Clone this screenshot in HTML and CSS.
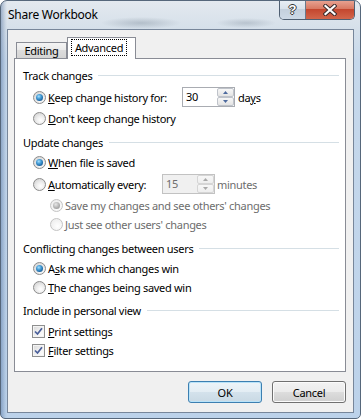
FILE: index.html
```html
<!DOCTYPE html>
<html>
<head>
<meta charset="utf-8">
<link rel="stylesheet" href="styles.css">
</head>
<body>
<div class="window">
  <div class="titlebar">
    <span class="title">Share Workbook</span>
    <div class="caption">
      <div class="cbtn help"><span class="qm">?</span></div>
      <div class="cbtn close">
        <svg width="14" height="12" viewBox="0 0 14 12"><path d="M2.5 2 L11.5 10 M11.5 2 L2.5 10" stroke="#3b2b2b" stroke-width="4.2" stroke-linecap="square" fill="none"/><path d="M2.5 2 L11.5 10 M11.5 2 L2.5 10" stroke="#fff" stroke-width="2.2" stroke-linecap="square" fill="none"/></svg>
      </div>
    </div>
  </div>
  <div class="client">
    <div class="tabs">
      <div class="tab">Editing</div>
      <div class="tab active"><span class="focus">Advanced</span></div>
    </div>
    <div class="panel">
      <div class="group-title">Track changes</div>
      <div class="opt tall first">
        <span class="radio on"></span><span class="lbl w-keep"><u>K</u>eep change history for:</span>
        <span class="spin"><span class="val">30</span><span class="arrows"><span class="arrow"><svg width="5" height="3" viewBox="0 0 5 3"><path d="M0 3 L2.5 0 L5 3Z" fill="#4d6a9e"/></svg></span><span class="arrow"><svg width="5" height="3" viewBox="0 0 5 3"><path d="M0 0 L5 0 L2.5 3Z" fill="#4d6a9e"/></svg></span></span></span>
        <span class="unit">da<u>y</u>s</span>
      </div>
      <div class="opt mid"><span class="radio"></span><span class="lbl"><u>D</u>on't keep change history</span></div>

      <div class="group-title g2">Update changes</div>
      <div class="opt mid"><span class="radio on"></span><span class="lbl"><u>W</u>hen file is saved</span></div>
      <div class="opt tall">
        <span class="radio"></span><span class="lbl w-auto"><u>A</u>utomatically every:</span>
        <span class="spin disabled"><span class="val">15</span><span class="arrows"><span class="arrow"><svg width="5" height="3" viewBox="0 0 5 3"><path d="M0 3 L2.5 0 L5 3Z" fill="#a8a8a8"/></svg></span><span class="arrow"><svg width="5" height="3" viewBox="0 0 5 3"><path d="M0 0 L5 0 L2.5 3Z" fill="#a8a8a8"/></svg></span></span></span>
        <span class="unit dis">minutes</span>
      </div>
      <div class="opt sub"><span class="radio on disabled"></span><span class="lbl dis">Save my changes and see others' changes</span></div>
      <div class="opt sub short"><span class="radio disabled"></span><span class="lbl dis">Just see other users' changes</span></div>

      <div class="group-title g3">Conflicting changes between users</div>
      <div class="opt"><span class="radio on"></span><span class="lbl">A<u>s</u>k me which changes win</span></div>
      <div class="opt short"><span class="radio"></span><span class="lbl"><u>T</u>he changes being saved win</span></div>

      <div class="group-title g4">Include in personal view</div>
      <div class="opt chk first"><span class="check"><svg width="9" height="9" viewBox="0 0 9 9"><path d="M1 4.5 L3.5 7 L8 1.2" stroke="#4a5f9a" stroke-width="1.7" fill="none"/></svg></span><span class="lbl"><u>P</u>rint settings</span></div>
      <div class="opt chk short"><span class="check"><svg width="9" height="9" viewBox="0 0 9 9"><path d="M1 4.5 L3.5 7 L8 1.2" stroke="#4a5f9a" stroke-width="1.7" fill="none"/></svg></span><span class="lbl"><u>F</u>ilter settings</span></div>
    </div>
    <div class="buttons">
      <button class="btn default">OK</button>
      <button class="btn">Cancel</button>
    </div>
  </div>
</div>
</body>
</html>
```
FILE: styles.css
```css
* { box-sizing: border-box; }
html, body { margin: 0; padding: 0; }
body {
  width: 361px;
  height: 419px;
  overflow: hidden;
  background: #fff;
  font-family: "Noto Sans", "Liberation Sans", sans-serif;
  font-size: 11px;
  letter-spacing: -0.3px;
  color: #000;
}
.window {
  width: 361px;
  height: 419px;
  border: 1px solid #56677b;
  border-radius: 7px 7px 5px 5px;
  background:
    linear-gradient(to right, rgba(60, 95, 145, 0.4), rgba(60, 95, 145, 0.1) 4px, rgba(60, 95, 145, 0) 6px),
    radial-gradient(ellipse 40px 6px at 140px 22px, rgba(110, 125, 140, 0.35), rgba(110, 125, 140, 0)),
    radial-gradient(ellipse 30px 5px at 245px 22px, rgba(110, 125, 140, 0.3), rgba(110, 125, 140, 0)),
    linear-gradient(to bottom, #e3e9ef 0, #d6e0ea 27px, #c6d8eb 60px, #bcd2ea 100%);
  display: flex;
  flex-direction: column;
  overflow: hidden;
}
.titlebar {
  height: 28px;
  flex: none;
  display: flex;
  align-items: flex-start;
  justify-content: space-between;
}
.title {
  font-size: 12px;
  letter-spacing: -0.25px;
  line-height: 28px;
  padding-left: 7px;
  color: #000;
}
.caption {
  display: flex;
  height: 20px;
  margin-top: -1px;
  margin-right: 5px;
  border: 1px solid #4f5f72;
  border-top: none;
  border-radius: 0 0 5px 5px;
  overflow: hidden;
}
.cbtn {
  display: flex;
  align-items: center;
  justify-content: center;
}
.help {
  width: 26px;
  border-right: 1px solid #6a798b;
  background: linear-gradient(#eaeff5, #d9e2ec 45%, #c4d0dd 50%, #cdd9e6);
}
.qm {
  font-family: "Liberation Sans", sans-serif;
  font-weight: bold;
  font-size: 13px;
  color: #fff;
  letter-spacing: 0;
  text-shadow: 1px 0 0 #333, -1px 0 0 #333, 0 1px 0 #333, 0 -1px 0 #333;
}
.close {
  width: 48px;
  background: linear-gradient(#e9a696, #d97a64 45%, #c4472f 50%, #d2664b);
}
.client {
  flex: 1;
  margin: 0 6px 5px 6px;
  border: 1px solid #77869a;
  background: #f0f0f0;
  padding: 0 7px 0 6px;
  display: flex;
  flex-direction: column;
}
.tabs {
  height: 28px;
  flex: none;
  display: flex;
  align-items: flex-end;
  padding-left: 2px;
}
.tab {
  width: 51px;
  height: 16px;
  border: 1px solid #898c95;
  border-bottom: none;
  background: linear-gradient(#f4f4f4, #e9e9e9 50%, #dcdcdc 50%, #d4d4d4);
  display: flex;
  align-items: center;
  justify-content: center;
  padding-bottom: 1px;
}
.tab.active {
  width: 69px;
  height: 22px;
  margin-bottom: -1px;
  background: #fff;
  position: relative;
  z-index: 1;
  padding: 0 5px 2px 0;
}
.focus {
  border: 1px dotted #000;
  padding: 0 3px;
  line-height: 15px;
}
.panel {
  height: 314px;
  flex: none;
  border: 1px solid #898c95;
  background: #fff;
  padding: 6px 6px 0 8px;
}
.group-title {
  display: flex;
  align-items: center;
  height: 20px;
  gap: 6px;
}
.group-title::after {
  content: "";
  flex: 1;
  height: 1px;
  background: #d5dfe5;
}
.g2 { margin-top: 3px; }
.g3 { margin-top: 4px; }
.g4 { margin-top: 3px; }
.opt {
  display: flex;
  align-items: center;
  height: 20px;
  padding-left: 10px;
  gap: 2px;
}
.opt.first { margin-top: 1px; }
.opt.tall { height: 22px; }
.opt.mid { height: 21px; }
.opt.short { height: 19px; }
.opt.sub { padding-left: 27px; }
.opt.chk { padding-left: 9px; gap: 3px; }
.lbl { white-space: nowrap; }
.w-keep { width: 132px; }
.w-auto { width: 112px; }
.dis { color: #6d6d6d; }
.unit { margin-left: 1px; }
.unit.dis { margin-left: 0; }
.radio {
  width: 13px;
  height: 13px;
  flex: none;
  border-radius: 50%;
  border: 1px solid #8c8c8c;
  background: radial-gradient(circle at 60% 65%, #ffffff 0, #f0f0f0 35%, #d6d6d6 80%, #cbcbcb 100%);
  display: grid;
  place-items: center;
}
.radio.on::after {
  content: "";
  width: 7px;
  height: 7px;
  border-radius: 50%;
  background: radial-gradient(circle at 40% 35%, #a6e0ff 0, #4aa0d8 35%, #1d67a3 70%, #123f6b 100%);
}
.radio.disabled {
  border-color: #c4c4c4;
  background: radial-gradient(circle at 60% 65%, #ffffff 0, #f6f6f6 40%, #e9e9e9 100%);
}
.radio.on.disabled::after {
  background: radial-gradient(circle at 40% 35%, #e8e8e8 0, #b5b5b5 50%, #8c8c8c 100%);
}
.check {
  width: 13px;
  height: 13px;
  flex: none;
  border: 1px solid #8e8f8f;
  background: linear-gradient(135deg, #d8d8d8, #f4f4f4 60%, #fff);
  box-shadow: inset 0 0 0 1px #f4f4f4;
  display: grid;
  place-items: center;
}
.spin {
  width: 53px;
  height: 20px;
  flex: none;
  display: flex;
  border: 1px solid #a9acb2;
  background: #fff;
}
.spin .val {
  flex: 1;
  padding-left: 3px;
  line-height: 18px;
}
.arrows {
  width: 17px;
  display: flex;
  flex-direction: column;
}
.arrow {
  flex: 1;
  border: 1px solid #bfc3ca;
  border-radius: 2px;
  background: linear-gradient(#f7f7f7, #e4e4e4);
  display: grid;
  place-items: center;
}
.spin.disabled {
  border-color: #c2c2c2;
  background: #f0f0f0;
  color: #6d6d6d;
}
.spin.disabled .arrow {
  border-color: #d5d5d5;
  background: linear-gradient(#f7f7f7, #eeeeee);
}
.buttons {
  flex: none;
  display: flex;
  justify-content: flex-end;
  gap: 10px;
  margin-top: 9px;
}
.btn {
  width: 74px;
  height: 22px;
  border: 1px solid #707070;
  border-radius: 3px;
  background: linear-gradient(#f2f2f2, #ebebeb 50%, #dddddd 50%, #cfcfcf);
  box-shadow: inset 0 0 0 1px #fbfbfb;
  font-family: inherit;
  font-size: 11px;
  letter-spacing: -0.3px;
  color: #000;
  padding: 0;
}
.btn.default {
  border-color: #3c7fb1;
  background: linear-gradient(#edf4f9, #e3edf4 50%, #d4e2ec 50%, #c9d9e4);
  box-shadow: inset 0 0 0 1px #b9e3f9;
}
```
